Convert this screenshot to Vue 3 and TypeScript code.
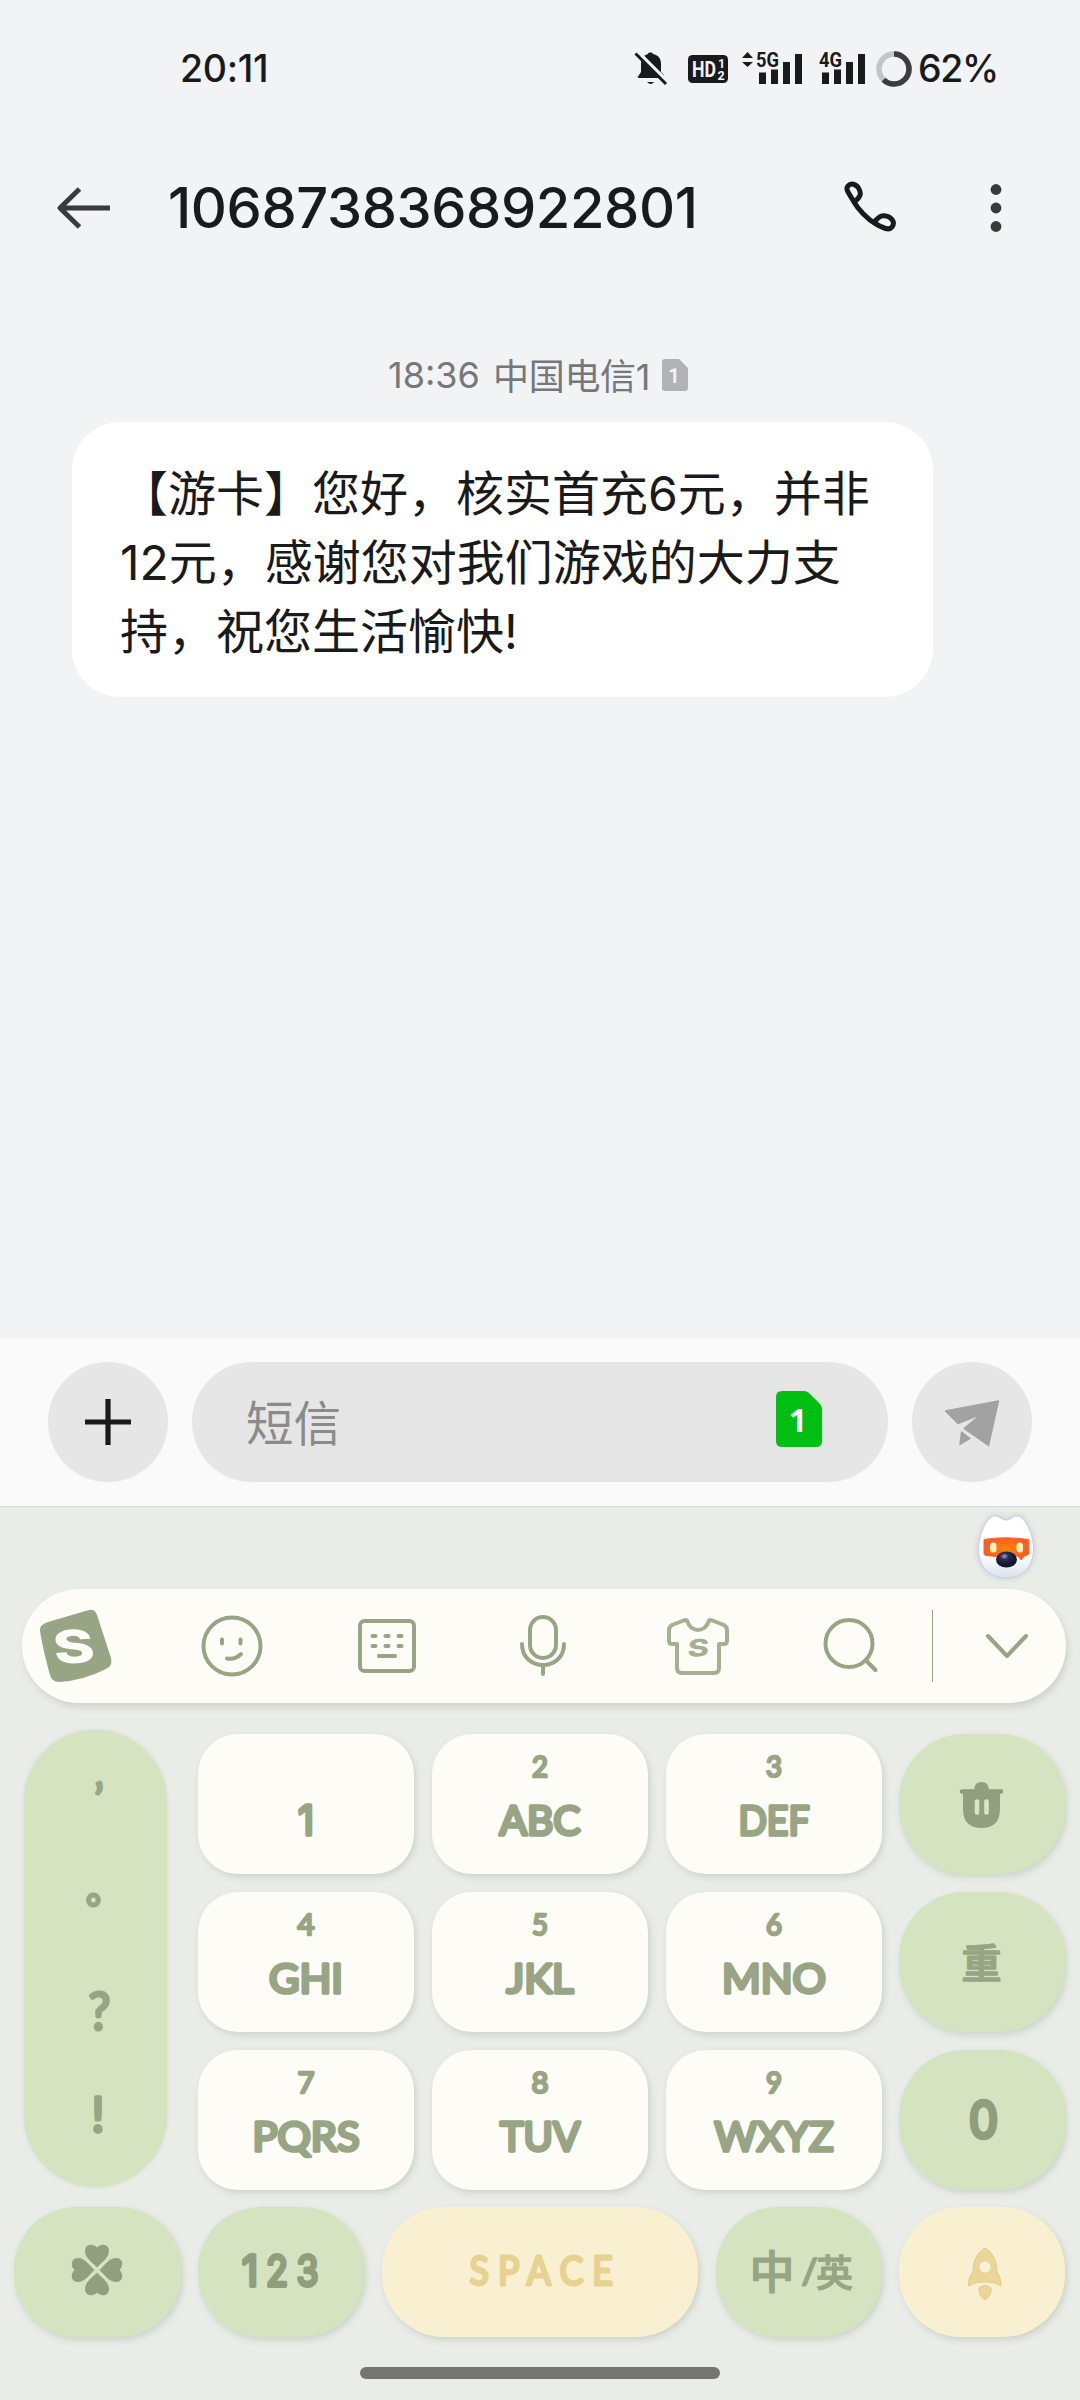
<script setup lang="ts">
interface LetterKey {
  digit: string
  letters: string
  width: number
  digitWidth: number
}

const letterKeys: LetterKey[] = [
  { digit: '', letters: '1', width: 16, digitWidth: 0 },
  { digit: '2', letters: 'ABC', width: 81, digitWidth: 16 },
  { digit: '3', letters: 'DEF', width: 71, digitWidth: 16 },
  { digit: '4', letters: 'GHI', width: 74, digitWidth: 17 },
  { digit: '5', letters: 'JKL', width: 67, digitWidth: 16 },
  { digit: '6', letters: 'MNO', width: 104, digitWidth: 16 },
  { digit: '7', letters: 'PQRS', width: 107, digitWidth: 17 },
  { digit: '8', letters: 'TUV', width: 80, digitWidth: 17 },
  { digit: '9', letters: 'WXYZ', width: 119, digitWidth: 16 },
]

const message: string[] = [
  '【游卡】您好，核实首充6元，并非',
  '12元，感谢您对我们游戏的大力支',
  '持，祝您生活愉快!',
]
</script>

<template>
  <div class="phone">
    <header class="status">
      <span class="clock">20:11</span>
      <div class="indicators">
        <svg class="bell" width="34" height="36" viewBox="0 0 34 36">
          <path d="M5 26V24l2-3V13C7 7 10 4 14 3c0-2 5-2 5 0c5 1 8 4 8 10v8l3 3v2q0 1-1 1H5q-2 0-1-3zM13 31h7q-3 4-7 0z" fill="#191a1b" />
          <path d="M3 0L34 31" stroke="#f2f3f5" stroke-width="3.4" />
          <path d="M1.500 2.500L32 33" stroke="#191a1b" stroke-width="3" />
        </svg>
        <svg class="hd" width="40" height="28" viewBox="0 0 40 28">
          <rect width="40" height="28" rx="4.500" fill="#191a1b" />
          <g fill="#f2f3f5" font-family="Roboto, sans-serif" font-weight="700">
            <text x="4" y="22" font-size="22" textLength="24" lengthAdjust="spacingAndGlyphs">HD</text>
            <text x="30" y="13" font-size="12.500">1</text>
            <text x="29.500" y="24.500" font-size="12.500">2</text>
          </g>
        </svg>
        <svg class="net5" width="62" height="42" viewBox="0 -4 62 42">
          <path d="M0 6L5.500 0L11 6zM0 10h11L5.500 15z" fill="#191a1b" />
          <text x="14" y="14.500" font-size="20" textLength="23" lengthAdjust="spacingAndGlyphs" class="net-label">5G</text>
          <path d="M17 20.500h7v11.500h-7zM29 17.500h7v14.500h-7zM41 10h7v22h-7zM53 2h7v30h-7z" fill="#191a1b" />
        </svg>
        <svg class="net4" width="48" height="42" viewBox="0 -4 48 42">
          <text x="0" y="14.500" font-size="20" textLength="23" lengthAdjust="spacingAndGlyphs" class="net-label">4G</text>
          <path d="M3 20.500h7v11.500H3zM15 17.500h7v14.500h-7zM27 10h7v22h-7zM39 2h7v30h-7z" fill="#191a1b" />
        </svg>
        <svg class="ring" width="36" height="36" viewBox="0 0 36 36">
          <circle cx="18" cy="18" r="15" fill="none" stroke="#c3c4c6" stroke-width="5.500" />
          <circle cx="18" cy="18" r="15" fill="none" stroke="#3c3d3e" stroke-width="5.500" stroke-dasharray="58.400 94.250" transform="rotate(-90 18 18)" />
        </svg>
        <span class="percent">62%</span>
      </div>
    </header>

    <div class="titlebar">
      <svg class="back" width="56" height="44" viewBox="0 0 56 44">
        <path d="M4 22H54M23.500 3L4 22L23.500 41" fill="none" stroke="#3b3b3c" stroke-width="5" stroke-linejoin="round" />
      </svg>
      <h1>1068738368922801</h1>
      <svg class="call" width="54" height="54" viewBox="0 0 54 54" fill="none" stroke="#191a1b" stroke-width="5" stroke-linejoin="round">
        <path d="M11 21C6 12 2 9 5 5C8 1.500 13 3 15.500 7C19 13 17.500 16 11 21M11 21C15 28 24 38 33 43C40 47 46 50 49 46C52 42 50 38 45 35.500C38 33 36 36 31 41" />
      </svg>
      <svg class="more" width="12" height="50" viewBox="0 0 12 50" fill="#3a3a3b">
        <circle cx="6" cy="6.500" r="5.400" /><circle cx="6" cy="25" r="5.400" /><circle cx="6" cy="43.500" r="5.400" />
      </svg>
    </div>

    <main class="thread">
      <div class="stamp">
        <span class="stamp-time">18:36</span>
        <span class="carrier">中国电信1</span>
        <svg width="26" height="32" viewBox="0 0 26 32">
          <path d="M3 0H17L26 9V29Q26 32 23 32H3Q0 32 0 29V3Q0 0 3 0z" fill="#b1b2b4" />
          <text x="12" y="23.500" font-size="20" text-anchor="middle" fill="#f2f3f5" font-family="Roboto" font-weight="700">1</text>
        </svg>
      </div>
      <div class="bubble">
        <p v-for="line in message" :key="line">{{ line }}</p>
      </div>
    </main>

    <section class="composer">
      <button class="round" aria-label="+">
        <svg width="46" height="46" viewBox="0 0 46 46"><path d="M23 0V46M0 23H46" stroke="#191a1b" stroke-width="5.200" /></svg>
      </button>
      <div class="field">
        <span>短信</span>
        <svg width="46" height="56" viewBox="0 0 46 56">
          <path d="M6 0H28Q31 0 33 2L44 13Q46 15 46 18V50Q46 56 40 56H6Q0 56 0 50V6Q0 0 6 0z" fill="#00bf12" />
          <text x="22" y="40.500" font-size="32" text-anchor="middle" fill="#fff" font-family="Noto Sans" font-weight="700">1</text>
        </svg>
      </div>
      <button class="round" aria-label="send">
        <svg width="58" height="50" viewBox="0 0 58 50" fill="#a2a2a2" stroke="#a2a2a2" stroke-width="1.400" stroke-linejoin="round">
          <path d="M2.500 14L55.500 4L45.500 48.500L21 31.500L38.500 17L15 26.500z" />
          <path d="M18.500 35L27 41.500L17 47.500z" />
        </svg>
      </button>
    </section>

    <section class="keyboard">
      <div class="mascot">
        <svg width="68" height="74" viewBox="0 0 68 74">
          <defs>
            <linearGradient id="head" x1="0" y1="0" x2="0" y2="1"><stop offset=".6" stop-color="#fff" /><stop offset="1" stop-color="#dbe1ec" /></linearGradient>
            <radialGradient id="visor"><stop offset="0" stop-color="#ff8500" /><stop offset="1" stop-color="#fa5c25" /></radialGradient>
            <radialGradient id="nose" cx=".4" cy=".3"><stop offset="0" stop-color="#a2a4bd" /><stop offset=".4" stop-color="#2b2d50" /><stop offset="1" stop-color="#16172f" /></radialGradient>
          </defs>
          <path d="M17 7Q20 3 25 4C30 6 30 8 34 8C38 8 39 6 43 4Q48 3 51 7C57 14 61.500 26 61.500 37C61.500 55 50 66 34 66C18 66 6.500 55 6.500 37C6.500 26 11 14 17 7z" fill="url(#head)" stroke="#c5cfdf" stroke-width="1" />
          <path d="M12 27.500Q33 24 56.500 27.500V42Q55 44 52 44L49 48L46 44Q29 46 14 43.500Q12 43 12 41z" fill="url(#visor)" stroke="#fa6430" stroke-width="1" stroke-linejoin="round" />
          <rect x="18" y="30.500" width="6.500" height="10" rx="3.200" fill="#fff4b8" />
          <rect x="44.500" y="30.500" width="6.500" height="10" rx="3.200" fill="#fff4b8" />
          <ellipse cx="34.500" cy="47.500" rx="10.500" ry="8" fill="url(#nose)" />
        </svg>
      </div>

      <div class="tools">
        <svg class="logo" width="76" height="76" viewBox="0 0 76 76">
          <path d="M9 14L50 2Q56 1 58 7L72 50Q74 58 67 61Q43 73 20 74Q13 74 11 67Q4 42 1 23Q0 17 9 14z" fill="#97a584" />
          <text transform="translate(37 55) rotate(-3) skewX(5) scale(1.350 1)" text-anchor="middle" font-family="Inter" font-size="46" font-weight="800" fill="#fdfcf6">S</text>
        </svg>
        <svg class="face" width="64" height="64" viewBox="0 0 64 64">
          <g fill="none" stroke="#97a584" stroke-width="4" stroke-linecap="round">
            <circle cx="32" cy="32" r="28.500" /><path d="M22 25.500v4M40.500 25.500v4M27 44.500Q35 46 41 40" />
          </g>
        </svg>
        <svg class="board" width="58" height="54" viewBox="0 0 58 54" fill="none" stroke="#97a584" stroke-width="4" stroke-linecap="round">
          <rect x="2" y="2" width="54" height="50" rx="4.500" />
          <path d="M14.500 17h3M27.500 17h3M40.500 17h3M14.500 27h3M27.500 27h3M40.500 27h3M21 37h16" />
        </svg>
        <svg class="mic" width="48" height="62" viewBox="0 0 48 62" fill="none" stroke="#97a584" stroke-width="4" stroke-linecap="round">
          <rect x="11" y="2" width="26" height="41" rx="13" /><path d="M3 29C3 57 45 57 45 29M24 51V59" />
        </svg>
        <svg class="shirt" width="62" height="58" viewBox="0 0 62 58">
          <path d="M5 8L18 3L20 3.500C24 16 38 16 42 3.500L44 3L57 8Q60 10 60 13V24Q60 27 57 27H52V51Q52 56 47 56H15Q10 56 10 51V27H5Q2 27 2 24V13Q2 10 5 8z" fill="none" stroke="#a3b192" stroke-width="4" stroke-linejoin="round" />
          <text transform="translate(31 39.500) rotate(-3) skewX(-6) scale(1.350 1)" text-anchor="middle" font-family="Inter" font-size="24" font-weight="800" fill="#a3b192">S</text>
        </svg>
        <svg class="search" width="56" height="58" viewBox="0 0 56 58" fill="none" stroke="#97a584" stroke-width="4" stroke-linecap="round">
          <circle cx="26" cy="26.500" r="23.500" /><path d="M43 43.500L52.500 53" />
        </svg>
        <i class="divider"></i>
        <svg class="chevron" width="44" height="26" viewBox="0 0 44 26" fill="none" stroke="#97a584" stroke-width="4" stroke-linecap="round" stroke-linejoin="round">
          <path d="M3 3L22 23L41 3" />
        </svg>
      </div>

      <div class="pad">
        <div class="symbols">
          <svg width="143" height="457" viewBox="0 0 143 457">
            <g class="glyph" stroke-width="2">
              <text x="75" y="84" font-size="42" font-family="Lato" font-weight="700" text-anchor="middle">’</text>
              <text x="62" y="172.500" font-size="38" class="cjk" stroke-width="3">。</text>
              <text x="75.500" y="299.500" font-size="53" stroke-width="3.200" font-family="Lato" text-anchor="middle" textLength="22" lengthAdjust="spacingAndGlyphs">?</text>
              <text x="74" y="401.500" font-size="48" stroke-width="3.600" font-family="Lato" text-anchor="middle">!</text>
            </g>
          </svg>
        </div>
        <div class="grid">
          <button v-for="k in letterKeys" :key="k.letters" class="key">
            <svg width="216" height="140" viewBox="0 0 216 140">
              <g class="glyph">
                <text v-if="k.digit" x="108" y="42.500" font-size="29.500" stroke-width="2.600" text-anchor="middle" :textLength="k.digitWidth" lengthAdjust="spacingAndGlyphs">{{ k.digit }}</text>
                <text x="108" y="101" :class="{ plain: k.letters === '1' }" font-size="41.500" stroke-width="3.600" text-anchor="middle" :textLength="k.width" lengthAdjust="spacingAndGlyphs">{{ k.letters }}</text>
              </g>
            </svg>
          </button>
        </div>
        <div class="side">
          <button class="key green">
            <svg width="166" height="140" viewBox="0 0 166 140">
              <path d="M63 57.500h39" stroke="#8d9b7b" stroke-width="4.500" stroke-linecap="round" />
              <path d="M75 57Q75 48 82.500 48Q90 48 90 57H101V75Q101 94 82.500 94Q64 94 64 75V57z" fill="#919f7e" />
              <path d="M78 67.500v11M87.500 67.500v11" stroke="#d9e5c5" stroke-width="4.600" stroke-linecap="round" />
            </svg>
          </button>
          <button class="key green">
            <svg width="166" height="140" viewBox="0 0 166 140">
              <text x="82.500" y="85.500" text-anchor="middle" font-size="40" class="cjk medium" stroke-width="1.600">重</text>
            </svg>
          </button>
          <button class="key green">
            <svg width="166" height="140" viewBox="0 0 166 140">
              <g class="glyph dark"><text x="84.500" y="88" class="plain" text-anchor="middle" font-size="50" stroke-width="4.500" textLength="29" lengthAdjust="spacingAndGlyphs">0</text></g>
            </svg>
          </button>
        </div>
      </div>

      <div class="bottom">
        <button class="key green">
          <svg width="167" height="130" viewBox="0 0 167 130">
            <g transform="translate(83 63)" fill="#919f7e">
              <path v-for="a in [0, 90, 180, 270]" :key="a" :transform="`rotate(${a})`" d="M0-2.500C-5-8-12-12-12-19C-12-26-4-27 0-22.500C4-27 12-26 12-19C12-12 5-8 0-2.500z" />
            </g>
          </svg>
        </button>
        <button class="key green">
          <svg width="166" height="130" viewBox="0 0 166 130">
            <g class="glyph dark plain" text-anchor="middle" font-size="42.500" stroke-width="3.800">
              <text x="52" y="79" textLength="16" lengthAdjust="spacingAndGlyphs">1</text>
              <text x="79" y="79" textLength="22" lengthAdjust="spacingAndGlyphs">2</text>
              <text x="109.500" y="79" textLength="22" lengthAdjust="spacingAndGlyphs">3</text>
            </g>
          </svg>
        </button>
        <button class="key cream">
          <svg width="316" height="130" viewBox="0 0 316 130">
            <g class="glyph gold"><text transform="translate(87.500 77.500) scale(.88 1)" font-size="40.500" stroke-width="3" textLength="163">SPACE</text></g>
          </svg>
        </button>
        <button class="key green">
          <svg width="166" height="130" viewBox="0 0 166 130">
            <text x="33.500" y="82" font-size="45" class="cjk medium" stroke-width="1.200">中</text>
            <text x="85.500" y="76.500" font-size="34" font-family="Lato" class="medium" stroke-width="2" textLength="16" lengthAdjust="spacingAndGlyphs">/</text>
            <text x="100" y="80" font-size="37" class="cjk medium" stroke-width="1">英</text>
          </svg>
        </button>
        <button class="key cream">
          <svg width="166" height="130" viewBox="0 0 166 130">
            <path d="M86 41C92 44 98 52 98 65Q102 70 102 79Q94 74 86 75Q78 74 69.500 79Q69 70 74 65C74 52 80 44 86 41z" fill="#ead698" stroke="#e3cb89" stroke-width="1" />
            <circle cx="86" cy="60" r="5.500" fill="#f8f2d6" />
            <path d="M80 81Q86 76 92 81Q93 88 86 93Q79 88 80 81z" fill="#ead698" stroke="#e3cb89" stroke-width="1" />
          </svg>
        </button>
      </div>
      <div class="home"></div>
    </section>
  </div>
</template>

<style>
body {
  background: #f2f3f5;
}
</style>

<style scoped>
* {
  box-sizing: border-box;
}
.phone {
  width: 1080px;
  height: 2400px;
  display: flex;
  flex-direction: column;
  background: #f2f3f5;
  color: #191a1b;
  font-family: Inter, "Noto Sans CJK SC", sans-serif;
  overflow: hidden;
}
svg {
  display: block;
  flex: none;
}
button {
  border: 0;
  padding: 0;
  margin: 0;
  font: inherit;
}
.status {
  height: 138px;
  display: flex;
  align-items: center;
  justify-content: space-between;
  padding: 0 85px 0 180px;
}
.clock,
.percent {
  font-size: 37.5px;
  font-weight: 450;
  line-height: 44px;
}
.clock {
  letter-spacing: -0.3px;
}
.indicators {
  display: flex;
  align-items: center;
}
.bell {
  margin-right: 20px;
}
.hd {
  margin-right: 14px;
}
.net5 {
  margin-right: 15px;
}
.net4 {
  margin-right: 9px;
}
.ring {
  margin-right: 6px;
}
.percent {
  width: 77px;
  letter-spacing: -1.4px;
}
.net-label {
  font-family: Roboto, sans-serif;
  font-weight: 700;
  fill: #191a1b;
}
.titlebar {
  height: 140px;
  display: flex;
  align-items: center;
  padding: 0 78px 0 56px;
}
h1 {
  margin: 0 0 0 56px;
  flex: 1;
  font-size: 56px;
  font-weight: 500;
  line-height: 66px;
  letter-spacing: -0.4px;
  white-space: nowrap;
}
.more {
  margin-left: 93px;
}
.thread {
  height: 1060px;
  padding: 72px 147px 0 72px;
}
.stamp {
  height: 50px;
  margin-bottom: 22px;
  padding-left: 316px;
  display: flex;
  align-items: center;
  font-size: 36px;
  color: #75777a;
  white-space: nowrap;
}
.stamp-time {
  width: 105px;
}
.carrier {
  width: 169px;
  padding-bottom: 3px;
  letter-spacing: -0.3px;
}
.bubble {
  height: 275px;
  border-radius: 48px;
  padding: 37px 48px 31px;
  background: #fff;
}
.bubble p {
  margin: 0;
  font-size: 48px;
  line-height: 69px;
  white-space: nowrap;
}
.composer {
  height: 168px;
  padding: 0 48px;
  display: flex;
  align-items: center;
  gap: 24px;
  background: #fafafa;
}
.round {
  width: 120px;
  height: 120px;
  border-radius: 50%;
  background: #e6e6e6;
  display: flex;
  align-items: center;
  justify-content: center;
}
.field {
  flex: 1;
  height: 120px;
  border-radius: 60px;
  background: #e6e6e6;
  display: flex;
  align-items: center;
  justify-content: space-between;
  padding: 0 66px 6px 54px;
  font-size: 47.5px;
  color: #8b8b8b;
}
.field span {
  padding-top: 2px;
}
.keyboard {
  height: 894px;
  border-top: 1px solid #d8dad6;
  background: #eaece7;
  display: flex;
  flex-direction: column;
}
.mascot {
  height: 82px;
  padding: 5px 0 0 972px;
  filter: drop-shadow(0 0 3px rgba(120, 140, 180, 0.35));
}
.tools {
  height: 114px;
  margin: 0 14px 0 22px;
  border-radius: 57px;
  background: #fdfcf6;
  box-shadow: 2px 4px 6px #ccd4cb;
  display: flex;
  align-items: center;
}
.logo { margin-left: 17px; }
.face { margin-left: 85px; }
.board { margin-left: 94px; }
.mic { margin-left: 103px; }
.shirt { margin-left: 100px; }
.search { margin-left: 94px; }
.divider {
  width: 1px;
  height: 72px;
  margin-left: 53px;
  background: #97a584;
}
.chevron { margin-left: 52px; }
.pad {
  height: 460px;
  margin-top: 27px;
  padding: 0 15px 0 24px;
  display: flex;
}
.symbols {
  width: 143px;
  height: 457px;
  border-radius: 72px;
  background: #d6e3c0;
  box-shadow: 0 0 4px #d3dacd;
}
.grid {
  margin: 4px 0 0 31px;
  display: grid;
  grid-template-columns: repeat(3, 216px);
  grid-auto-rows: 140px;
  gap: 18px;
}
.side {
  margin: 4px 0 0 17px;
  width: 166px;
  display: grid;
  grid-auto-rows: 140px;
  gap: 18px;
}
.key {
  border-radius: 40px;
  background: #fdfcf6;
  box-shadow: 2px 3px 6px #cbd4cb;
}
.green {
  border-radius: 66px;
  background: #d6e3c0;
}
.cream {
  border-radius: 62px;
  background: #f8f0d1;
}
.bottom {
  height: 130px;
  margin: 17px 15px 0 14px;
  display: grid;
  grid-template-columns: 167px 166px 316px 166px 166px;
  column-gap: 17.5px;
}
.bottom .key {
  border-radius: 62px;
}
.bottom .key:nth-child(2) {
  margin: 0 1px 0 -1px;
}
.glyph {
  fill: #97a584;
  stroke: #97a584;
  stroke-linejoin: round;
  stroke-linecap: round;
  font-family: Lato, sans-serif;
}
.plain {
  font-family: Inter, sans-serif;
}
.dark {
  fill: #909e7d;
  stroke: #909e7d;
}
.gold {
  fill: #e8d292;
  stroke: #e8d292;
}
.cjk {
  font-family: "Noto Sans CJK SC", sans-serif;
}
.medium {
  fill: #97a584;
  stroke: #97a584;
  stroke-linejoin: round;
  font-weight: 500;
}
.home {
  width: 360px;
  height: 12px;
  margin: 30px auto 0;
  border-radius: 6px;
  background: #757672;
}
</style>
